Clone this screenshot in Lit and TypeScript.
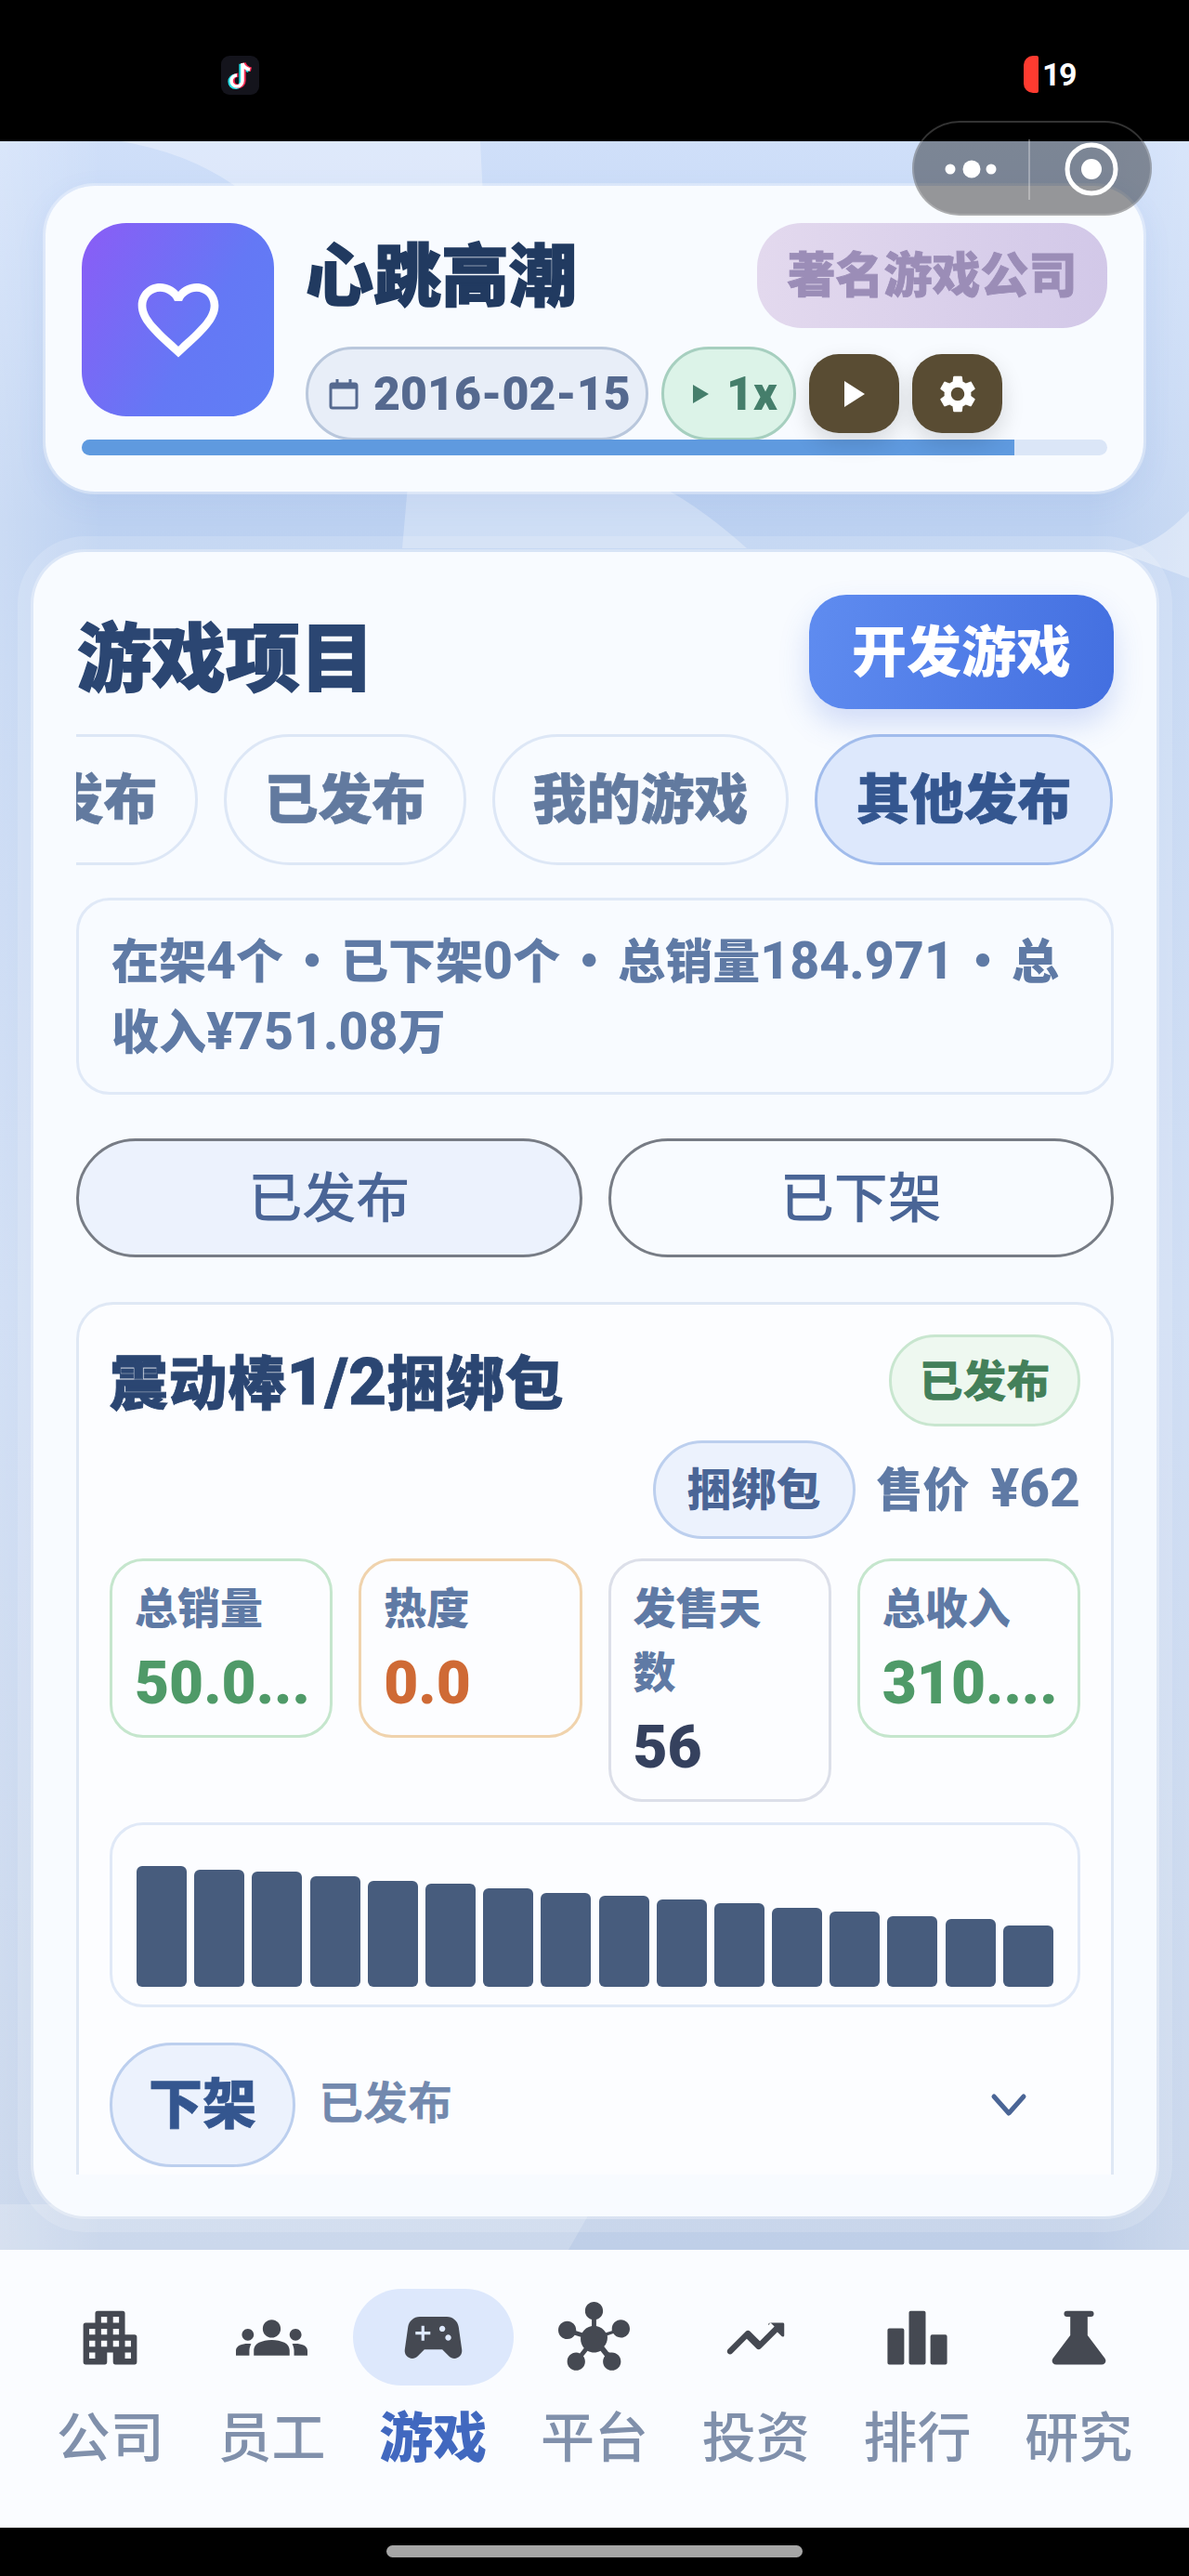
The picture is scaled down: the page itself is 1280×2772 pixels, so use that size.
import { LitElement, css, html, svg } from "lit";
import { customElement } from "lit/decorators.js";

const ICONS = {
  apartment: "M7.8 3h8.4a.8.8 0 0 1 .8.8V11h3.2a.8.8 0 0 1 .8.8v8.4a.8.8 0 0 1-.8.8H13.8a.8.8 0 0 1-.8-.8V17h-2v3.2a.8.8 0 0 1-.8.8H3.8a.8.8 0 0 1-.8-.8V7.8a.8.8 0 0 1 .8-.8H7V3.8a.8.8 0 0 1 .8-.8zM9 5h2v2H9zM13 5h2v2h-2zM5 9h2v2H5zM9 9h2v2H9zM13 9h2v2h-2zM5 13h2v2H5zM9 13h2v2H9zM13 13h2v2h-2zM17 13h2v2h-2zM5 17h2v2H5zM17 17h2v2h-2z",
  groups: "M12 12.75c1.63 0 3.07.39 4.24.9 1.08.48 1.76 1.56 1.76 2.73V18H6v-1.61c0-1.18.68-2.26 1.76-2.73 1.17-.52 2.61-.91 4.24-.91zM4 13c1.1 0 2-.9 2-2s-.9-2-2-2-2 .9-2 2 .9 2 2 2zm1.13 1.1c-.37-.06-.74-.1-1.13-.1-.99 0-1.93.21-2.78.58C.48 14.9 0 15.62 0 16.43V18h4.5v-1.61c0-.83.23-1.61.63-2.29zM20 13c1.1 0 2-.9 2-2s-.9-2-2-2-2 .9-2 2 .9 2 2 2zm4 3.43c0-.81-.48-1.53-1.22-1.85-.85-.37-1.79-.58-2.78-.58-.39 0-.76.04-1.13.1.4.68.63 1.46.63 2.29V18H24v-1.57zM12 6c1.66 0 3 1.34 3 3s-1.34 3-3 3-3-1.34-3-3 1.34-3 3-3z",
  game: "M21.58 16.09l-1.09-7.66C20.21 6.46 18.52 5 16.53 5H7.47C5.48 5 3.79 6.46 3.51 8.43l-1.09 7.66C2.2 17.63 3.39 19 4.94 19c.68 0 1.32-.27 1.8-.75L9 16h6l2.25 2.25c.48.48 1.13.75 1.8.75 1.56 0 2.75-1.37 2.53-2.91zM11 11H9v2H8v-2H6v-1h2V8h1v2h2v1zm4-1c-.55 0-1-.45-1-1s.45-1 1-1 1 .45 1 1-.45 1-1 1zm2 3c-.55 0-1-.45-1-1s.45-1 1-1 1 .45 1 1-.45 1-1 1z",
  hub: "M8.4 18.2c.38.5.6 1.12.6 1.8 0 1.66-1.34 3-3 3s-3-1.34-3-3 1.34-3 3-3c.44 0 .85.09 1.23.26l1.41-1.77c-.92-1.03-1.29-2.39-1.09-3.69l-2.03-.68c-.54.83-1.46 1.38-2.52 1.38-1.66 0-3-1.34-3-3s1.34-3 3-3 3 1.34 3 3c0 .07 0 .14-.01.21l2.03.68c.64-1.21 1.82-2.09 3.22-2.32l0-2.16C9.96 5.58 9 4.4 9 3c0-1.66 1.34-3 3-3s3 1.34 3 3c0 1.4-.96 2.58-2.25 2.91v2.16c1.4.23 2.58 1.11 3.22 2.32l2.03-.68C18 9.14 18 9.07 18 9c0-1.66 1.34-3 3-3s3 1.34 3 3-1.34 3-3 3c-1.06 0-1.98-.55-2.52-1.38l-2.03.68c.2 1.29-.16 2.65-1.09 3.69l1.41 1.77C17.15 17.09 17.56 17 18 17c1.66 0 3 1.34 3 3s-1.34 3-3 3-3-1.34-3-3c0-.68.22-1.3.6-1.8l-1.41-1.77c-1.35.75-3.01.76-4.37 0L8.4 18.2z",
  trend: "M16.85 6.85l1.44 1.44-4.88 4.88-3.29-3.29c-.39-.39-1.02-.39-1.41 0l-6 6.01c-.39.39-.39 1.02 0 1.41.39.39 1.02.39 1.41 0L9 12.41l3.29 3.29c.39.39 1.02.39 1.41 0l5.59-5.58 1.44 1.44c.31.31.85.09.85-.35V7.5c.01-.28-.21-.5-.49-.5h-4.29c-.45 0-.67.54-.35.85z",
  bars: "M2.6 8.9h4.4a.6.6 0 0 1 .6.6V20.4a.6.6 0 0 1-.6.6H2.6a.6.6 0 0 1-.6-.6V9.5a.6.6 0 0 1 .6-.6zM9.8 3h4.4a.6.6 0 0 1 .6.6V20.4a.6.6 0 0 1-.6.6H9.8a.6.6 0 0 1-.6-.6V3.6a.6.6 0 0 1 .6-.6zM17 11h4.4a.6.6 0 0 1 .6.6v8.8a.6.6 0 0 1-.6.6H17a.6.6 0 0 1-.6-.6v-8.8a.6.6 0 0 1 .6-.6z",
  flask: "M8 3h8a.9.9 0 0 1 0 2h-1.1v6.2l5.8 7.7c.7 1 .1 2.1-1.1 2.1H4.4c-1.2 0-1.8-1.1-1.1-2.1l5.8-7.7V5H8a.9.9 0 0 1 0-2z",
  heart: "M16.5 3c-1.74 0-3.41.81-4.5 2.09C10.91 3.81 9.24 3 7.5 3 4.42 3 2 5.42 2 8.5c0 3.78 3.4 6.86 8.55 11.54L12 21.35l1.45-1.32C18.6 15.36 22 12.28 22 8.5 22 5.42 19.58 3 16.5 3zm-4.4 15.55l-.1.1-.1-.1C7.14 14.24 4 11.39 4 8.5 4 6.5 5.5 5 7.5 5c1.54 0 3.04.99 3.57 2.36h1.87C13.46 5.99 14.96 5 16.5 5c2 0 3.5 1.5 3.5 3.5 0 2.89-3.14 5.74-7.9 10.05z",
  gear: "M19.14 12.94c.04-.3.06-.61.06-.94 0-.32-.02-.64-.07-.94l2.03-1.58c.18-.14.23-.41.12-.61l-1.92-3.32c-.12-.22-.37-.29-.59-.22l-2.39.96c-.5-.38-1.03-.7-1.62-.94l-.36-2.54c-.04-.24-.24-.41-.48-.41h-3.84c-.24 0-.43.17-.47.41l-.36 2.54c-.59.24-1.13.57-1.62.94l-2.39-.96c-.22-.08-.47 0-.59.22L2.74 8.87c-.12.21-.08.47.12.61l2.03 1.58c-.05.3-.09.63-.09.94s.02.64.07.94l-2.03 1.58c-.18.14-.23.41-.12.61l1.92 3.32c.12.22.37.29.59.22l2.39-.96c.5.38 1.03.7 1.62.94l.36 2.54c.05.24.24.41.48.41h3.84c.24 0 .44-.17.47-.41l.36-2.54c.59-.24 1.13-.56 1.62-.94l2.39.96c.22.08.47 0 .59-.22l1.92-3.32c.12-.22.07-.47-.12-.61l-2.01-1.58zM12 15.6c-1.98 0-3.6-1.62-3.6-3.6s1.62-3.6 3.6-3.6 3.6 1.62 3.6 3.6-1.62 3.6-3.6 3.6z",
};

const NAV = [
  { label: "公司", icon: ICONS.apartment },
  { label: "员工", icon: ICONS.groups },
  { label: "游戏", icon: ICONS.game, active: true },
  { label: "平台", icon: ICONS.hub },
  { label: "投资", icon: ICONS.trend },
  { label: "排行", icon: ICONS.bars },
  { label: "研究", icon: ICONS.flask },
];

const TABS = ["未发布", "已发布", "我的游戏", "其他发布"];

const STATS = [
  { label: "总销量", value: "50.0...", tone: "green" },
  { label: "热度", value: "0.0", tone: "orange" },
  { label: "发售天数", value: "56", tone: "grey" },
  { label: "总收入", value: "310....", tone: "green" },
];

// bar heights read off the sales chart
const BARS = [130, 126, 124, 119, 114, 111, 106, 101, 98, 94, 90, 85, 81, 76, 73, 66];

const icon = (d: string, cls = "") =>
  html`<svg class=${cls} viewBox="0 0 24 24" fill="currentColor">${svg`<path fill-rule="evenodd" d=${d}></path>`}</svg>`;

@customElement("app-root")
export class AppRoot extends LitElement {
  static styles = css`
    :host {
      display: block;
      width: 1280px;
      height: 2772px;
      font-family: Inter, "Noto Sans CJK SC", sans-serif;
    }
    * {
      box-sizing: border-box;
    }
    /* latin runs sit larger and narrower next to the CJK text */
    .n {
      font-family: Roboto, sans-serif;
      font-size: 1.12em;
      line-height: 1;
    }
    .phone {
      position: relative;
      display: flex;
      flex-direction: column;
      height: 100%;
      background: #000;
      overflow: hidden;
    }
    .status {
      flex: none;
      height: 152px;
      display: flex;
      justify-content: space-between;
      padding: 60px 122px 0 238px;
    }
    .tiktok {
      width: 41px;
      height: 42px;
    }
    .battery {
      display: flex;
      gap: 4px;
      height: 40px;
      align-items: center;
      color: #fff;
      font-family: Roboto, sans-serif;
      font-size: 34px;
      font-weight: 700;
      letter-spacing: -1.5px;
    }
    .battery i {
      width: 16px;
      height: 40px;
      background: #ff3b30;
      border-radius: 10px 2px 2px 10px;
    }
    .capsule {
      position: absolute;
      left: 982px;
      top: 130px;
      width: 258px;
      height: 102px;
      border-radius: 51px;
      background: rgba(0, 0, 0, 0.4);
      box-shadow: inset 0 0 0 2px rgba(255, 255, 255, 0.2);
      z-index: 5;
    }
    .capsule svg {
      width: 258px;
      height: 102px;
      display: block;
    }
    .stage {
      position: relative;
      flex: 1;
      min-height: 0;
      padding: 45px 46px 36px 46px;
      display: flex;
      flex-direction: column;
      background: linear-gradient(90deg, rgba(255, 255, 255, 0.22), rgba(255, 255, 255, 0) 110px),
        linear-gradient(270deg, rgba(255, 255, 255, 0.2), rgba(255, 255, 255, 0) 110px),
        linear-gradient(180deg, #cfdff9 0%, #bcd1f1 18%, #c6d7f2 55%, #bfcfe8 100%);
      overflow: hidden;
    }
    .deco {
      position: absolute;
      inset: 0;
      width: 100%;
      height: 100%;
    }
    .top-card {
      position: relative;
      flex: none;
      height: 335px;
      padding: 40px 39px 0;
      border: 3px solid rgba(255, 255, 255, 0.3);
      border-radius: 56px;
      background: #f8fbff;
      background-clip: padding-box;
      box-shadow: 0 10px 30px rgba(90, 130, 200, 0.08);
    }
    .head {
      display: flex;
      gap: 34px;
      height: 234px;
    }
    .logo {
      flex: none;
      width: 207px;
      height: 208px;
      border-radius: 48px;
      background: linear-gradient(120deg, #8b5cf6 0%, #6478f5 60%, #5f7ff5 100%);
      color: #fff;
      display: flex;
      align-items: center;
      justify-content: center;
    }
    .logo svg {
      width: 104px;
      height: 104px;
    }
    .info {
      flex: 1;
      min-width: 0;
      display: flex;
      flex-direction: column;
      gap: 20px;
    }
    .title-row {
      height: 113px;
      display: flex;
      justify-content: space-between;
    }
    .name {
      font-size: 73px;
      font-weight: 900;
      line-height: 113px;
      color: #213a60;
      -webkit-text-stroke: 1.5px #213a60;
    }
    .rank {
      width: 377px;
      height: 113px;
      border-radius: 48px;
      background: linear-gradient(90deg, #e3d9ee, #d2c8e8);
      color: #9b8db7;
      font-size: 52px;
      font-weight: 800;
      line-height: 113px;
      text-align: center;
      -webkit-text-stroke: 0.8px #9b8db7;
    }
    .controls {
      display: flex;
      align-items: center;
      height: 101px;
      gap: 14px;
    }
    .date,
    .speed {
      height: 101px;
      border-radius: 51px;
      border: 3px solid;
      display: flex;
      align-items: center;
      font-family: Roboto, sans-serif;
      font-weight: 900;
    }
    .date {
      width: 369px;
      padding-left: 22px;
      gap: 16px;
      font-size: 50px;
      background: #e8eef8;
      border-color: #b9c7dc;
      color: #55698f;
    }
    .date svg {
      width: 32px;
      height: 34px;
      flex: none;
    }
    .speed {
      width: 145px;
      padding-left: 31px;
      gap: 19px;
      font-size: 50px;
      background: #dcf3e8;
      border-color: #a6cfbf;
      color: #457e6b;
    }
    .speed svg {
      width: 17px;
      height: 20px;
      flex: none;
    }
    .round {
      width: 97px;
      height: 85px;
      border-radius: 32px;
      background: #594c33;
      color: #fff;
      display: flex;
      align-items: center;
      justify-content: center;
      box-shadow: 0 10px 24px rgba(0, 0, 0, 0.14);
      position: relative;
      z-index: 2;
    }
    .round .play {
      width: 22px;
      height: 28px;
    }
    .round .gear {
      width: 48px;
      height: 48px;
    }
    .track {
      position: relative;
      height: 17px;
      margin-top: -1px;
      border-radius: 9px;
      background: #dbe6f7;
      overflow: hidden;
    }
    .track div {
      height: 100%;
      width: 1004px;
      background: #5f9adf;
    }
    .panel {
      position: relative;
      flex: 1;
      min-height: 0;
      margin: 62px -11px 0 -10px;
      padding: 46px 46px 45px;
      border-radius: 56px;
      background: #f8fbff;
      box-shadow: 0 0 0 3px rgba(255, 255, 255, 0.3), 0 0 0 17px rgba(255, 255, 255, 0.16);
      display: flex;
      flex-direction: column;
    }
    .scroll {
      flex: 1;
      min-height: 0;
      overflow: hidden;
    }
    .panel-head {
      display: flex;
      justify-content: space-between;
      align-items: center;
      height: 123px;
    }
    .panel-head h2 {
      margin: 0 0 0 1px;
      font-size: 80px;
      font-weight: 900;
      color: #2b4672;
      -webkit-text-stroke: 1.5px #2b4672;
    }
    .develop {
      width: 328px;
      height: 123px;
      border-radius: 40px;
      background: linear-gradient(100deg, #5f8cf0, #436fe0);
      color: #fff;
      font-size: 59px;
      font-weight: 800;
      line-height: 123px;
      text-align: center;
      box-shadow: 0 16px 32px rgba(70, 110, 220, 0.22);
    }
    .tabs {
      display: flex;
      gap: 28px;
      margin-top: 27px;
      overflow: hidden;
      height: 141px;
    }
    .tab {
      flex: none;
      height: 141px;
      padding: 0 40.5px;
      border: 3px solid #dde7f6;
      border-radius: 71px;
      color: #627a9f;
      font-size: 58px;
      font-weight: 800;
      line-height: 135px;
      -webkit-text-stroke: 0.6px currentColor;
    }
    .tab:first-child {
      margin-left: -130px;
    }
    .tab.on {
      padding: 0 41.5px;
      background: #dde8fc;
      border-color: #a1bcec;
      color: #34568f;
    }
    .summary {
      height: 212px;
      margin-top: 35px;
      padding: 24px 35px 0;
      border: 3px solid #e0e9f7;
      border-radius: 36px;
      color: #5f7aa5;
      font-size: 51px;
      font-weight: 800;
      line-height: 76px;
    }
    .summary .n {
      font-size: 1.09em;
    }
    .sep {
      display: inline-block;
      width: 62px;
      text-align: center;
      font-family: "Noto Sans CJK SC", sans-serif;
      font-weight: 800;
    }
    .toggle {
      display: grid;
      grid-template-columns: 1fr 1fr;
      gap: 28px;
      margin-top: 47px;
    }
    .toggle div {
      height: 128px;
      border: 3px solid #777c85;
      border-radius: 64px;
      color: #4a6596;
      font-size: 58px;
      font-weight: 500;
      line-height: 122px;
      text-align: center;
    }
    .toggle .on {
      background: #ecf2fd;
    }
    .game {
      margin-top: 48px;
      padding: 32px 33px 0;
      height: 1000px;
      border: 3px solid #dfe8f5;
      border-radius: 40px;
      background: #fcfdff;
    }
    .game-head {
      display: flex;
      justify-content: space-between;
      align-items: center;
      height: 99px;
    }
    .game-head h3 {
      margin: 0 0 4px;
      font-size: 63px;
      font-weight: 900;
      letter-spacing: 0.5px;
      color: #2b4672;
      -webkit-text-stroke: 0.8px #2b4672;
    }
    .state {
      width: 206px;
      height: 99px;
      border: 3px solid #c8e6cf;
      border-radius: 50px;
      background: #eef8f0;
      color: #43805a;
      font-size: 47px;
      font-weight: 800;
      line-height: 93px;
      text-align: center;
    }
    .meta {
      display: flex;
      justify-content: flex-end;
      align-items: center;
      gap: 23px;
      margin-top: 15px;
    }
    .bundle {
      width: 218px;
      height: 106px;
      border: 3px solid #bccfee;
      border-radius: 53px;
      background: #ecf2fd;
      color: #4a6596;
      font-size: 48px;
      font-weight: 800;
      line-height: 100px;
      text-align: center;
    }
    .price {
      color: #5f7aa5;
      font-size: 50px;
      font-weight: 800;
      word-spacing: 12px;
      line-height: 100px;
    }
    .price .n {
      font-size: 1.14em;
    }
    .stats {
      display: grid;
      grid-template-columns: repeat(4, minmax(0, 1fr));
      gap: 28px;
      align-items: start;
      margin-top: 21px;
    }
    .stat {
      padding: 16px 28px 15px 24px;
      border: 3px solid;
      border-radius: 36px;
      font-weight: 800;
    }
    .stat span {
      display: block;
      margin-bottom: 7px;
      color: #5f7aa5;
      font-size: 46px;
      line-height: 69px;
    }
    .stat b {
      display: block;
      font-family: Roboto, sans-serif;
      font-size: 64px;
      font-weight: 900;
      line-height: 80px;
      white-space: nowrap;
    }
    .green {
      border-color: #c5e6cd;
    }
    .green b {
      color: #4f9a68;
    }
    .orange {
      border-color: #f0d3ad;
    }
    .orange b {
      color: #cf6a35;
    }
    .grey {
      border-color: #dcdfe9;
    }
    .grey b {
      color: #35415e;
    }
    .chart {
      display: flex;
      align-items: flex-end;
      justify-content: space-between;
      height: 199px;
      margin-top: 22px;
      padding: 0 26px 19px;
      border: 3px solid #e0e9f7;
      border-radius: 36px;
    }
    .chart div {
      width: 54px;
      background: #475c7d;
      border-radius: 6px;
    }
    .actions {
      display: flex;
      align-items: center;
      margin-top: 38px;
    }
    .off {
      width: 200px;
      height: 134px;
      border: 3px solid #bccfee;
      border-radius: 67px;
      background: #ecf2fd;
      color: #34568f;
      font-size: 58px;
      font-weight: 800;
      line-height: 126px;
      text-align: center;
      -webkit-text-stroke: 0.6px #34568f;
    }
    .shelf {
      margin-left: 25px;
      flex: 1;
      color: #7389ae;
      font-size: 48px;
      font-weight: 700;
      line-height: 64px;
      padding-bottom: 4px;
    }
    .chev {
      width: 40px;
      height: 26px;
      margin-right: 57px;
    }
    .nav {
      flex: none;
      height: 299px;
      padding: 42px 32px 0;
      display: grid;
      grid-template-columns: repeat(7, 1fr);
      background: #fafcff;
    }
    .item {
      display: flex;
      flex-direction: column;
      align-items: center;
      color: #8090ab;
      font-size: 58px;
      font-weight: 500;
    }
    .item .pill {
      width: 173px;
      height: 104px;
      border-radius: 52px;
      display: flex;
      align-items: center;
      justify-content: center;
      color: #454952;
    }
    .item.on .pill {
      background: #dde8fc;
    }
    .item.on {
      color: #4168bf;
      font-weight: 800;
    }
    .item svg {
      width: 77px;
      height: 77px;
    }
    .item label {
      margin-top: 17px;
      line-height: 78px;
    }
    .home {
      flex: none;
      height: 52px;
      padding-top: 19px;
      background: #000;
    }
    .home div {
      width: 448px;
      height: 13px;
      margin: 0 auto;
      border-radius: 7px;
      background: #a6a6a6;
    }
  `;

  render() {
    return html`
      <div class="phone">
        <div class="status">
          <svg class="tiktok" viewBox="0 0 41 42">
            <rect width="41" height="42" rx="9" fill="#14141c"></rect>
            <path d="M23 8v19a6 6 0 1 1-6-6M23 8c1 4 4 6 8 7" fill="none" stroke="#25e0e6" stroke-width="4.5" transform="translate(-1.4 .8)"></path>
            <path d="M23 8v19a6 6 0 1 1-6-6M23 8c1 4 4 6 8 7" fill="none" stroke="#fe2c55" stroke-width="4.5" transform="translate(1.4 -.2)"></path>
            <path d="M23 8v19a6 6 0 1 1-6-6M23 8c1 4 4 6 8 7" fill="none" stroke="#fff" stroke-width="3.5"></path>
          </svg>
          <div class="battery"><i></i>19</div>
        </div>

        <div class="capsule">
          <svg viewBox="0 0 258 102" fill="#fff">
            <circle cx="41" cy="52" r="5.5"></circle>
            <circle cx="64" cy="52" r="9.5"></circle>
            <circle cx="85" cy="52" r="5.5"></circle>
            <rect x="125" y="20" width="2" height="65" fill="rgba(255,255,255,.3)"></rect>
            <circle cx="193" cy="52" r="26" fill="none" stroke="#fff" stroke-width="5"></circle>
            <circle cx="193" cy="52" r="11"></circle>
          </svg>
        </div>

        <div class="stage">
          <svg class="deco" viewBox="0 0 1280 2269" preserveAspectRatio="none">
            <path d="M130 0Q200 12 250 46L270 60H520L517 0Z" fill="rgba(255,255,255,.32)"></path>
            <path d="M439 370L433 438H804Q750 390 708 370Z" fill="rgba(255,255,255,.28)"></path>
            <path d="M1280 398Q1240 440 1200 441L1280 470Z" fill="rgba(255,255,255,.35)"></path>
            <path d="M0 2269H612L640 2220H0Z" fill="rgba(255,255,255,.2)"></path>
          </svg>

          <div class="top-card">
            <div class="head">
              <div class="logo">${icon(ICONS.heart)}</div>
              <div class="info">
                <div class="title-row">
                  <div class="name">心跳高潮</div>
                  <div class="rank">著名游戏公司</div>
                </div>
                <div class="controls">
                  <div class="date">
                    <svg viewBox="0 0 32 34" fill="none" stroke="currentColor" stroke-width="3">
                      <rect x="2" y="6" width="28" height="26" rx="2"></rect>
                      <path d="M2 9h28" stroke-width="5"></path>
                      <path d="M9 1v5M23 1v5"></path>
                    </svg>
                    2016-02-15
                  </div>
                  <div class="speed">
                    <svg viewBox="0 0 17 20" fill="currentColor"><polygon points="0,0 17,10 0,20"></polygon></svg>
                    1x
                  </div>
                  <div class="round">
                    <svg class="play" viewBox="0 0 22 28" fill="currentColor"><polygon points="0,0 22,14 0,28"></polygon></svg>
                  </div>
                  <div class="round">${icon(ICONS.gear, "gear")}</div>
                </div>
              </div>
            </div>
            <div class="track"><div></div></div>
          </div>

          <div class="panel">
            <div class="panel-head">
              <h2>游戏项目</h2>
              <div class="develop">开发游戏</div>
            </div>
            <div class="scroll">
              <div class="tabs">
                ${TABS.map((t, i) => html`<div class="tab ${i === 3 ? "on" : ""}">${t}</div>`)}
              </div>
              <div class="summary"><span>在架</span><span class="n">4</span><span>个</span><span class="sep">·</span><span>已下架</span><span class="n">0</span><span>个</span><span class="sep">·</span><span>总销量</span><span class="n">184.971</span><span class="sep">·</span><span>总</span><span>收入</span><span class="n">¥751.08</span><span>万</span></div>
              <div class="toggle">
                <div class="on">已发布</div>
                <div>已下架</div>
              </div>
              <div class="game">
                <div class="game-head">
                  <h3>震动棒<span class="n">1/2</span>捆绑包</h3>
                  <div class="state">已发布</div>
                </div>
                <div class="meta">
                  <div class="bundle">捆绑包</div>
                  <div class="price">售价 <span class="n">¥62</span></div>
                </div>
                <div class="stats">
                  ${STATS.map(
                    (s) => html`<div class="stat ${s.tone}"><span>${s.label}</span><b>${s.value}</b></div>`
                  )}
                </div>
                <div class="chart">
                  ${BARS.map((h) => html`<div style="height:${h}px"></div>`)}
                </div>
                <div class="actions">
                  <div class="off">下架</div>
                  <div class="shelf">已发布</div>
                  <svg class="chev" viewBox="0 0 40 26" fill="none" stroke="#4a6596" stroke-width="5" stroke-linecap="round" stroke-linejoin="round">
                    <path d="M4 4l16 18L36 4"></path>
                  </svg>
                </div>
              </div>
            </div>
          </div>
        </div>

        <div class="nav">
          ${NAV.map(
            (n) => html`<div class="item ${n.active ? "on" : ""}">
              <div class="pill">${icon(n.icon)}</div>
              <label>${n.label}</label>
            </div>`
          )}
        </div>
        <div class="home"><div></div></div>
      </div>
    `;
  }
}
